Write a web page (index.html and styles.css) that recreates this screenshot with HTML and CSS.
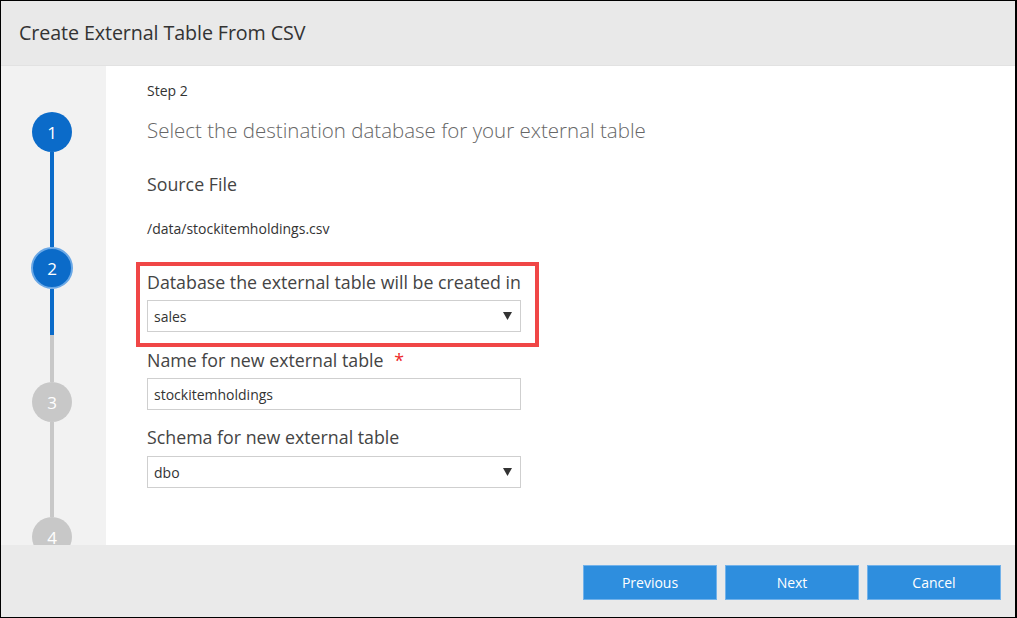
FILE: index.html
```html
<!DOCTYPE html>
<html lang="en">
<head>
<meta charset="utf-8">
<title>Create External Table From CSV</title>
<link rel="stylesheet" href="styles.css">
</head>
<body>
<div class="dialog">
  <header class="header">
    <h1 class="title">Create External Table From CSV</h1>
  </header>
  <div class="body">
    <nav class="steps">
      <div class="circle done">1</div>
      <div class="line blue"></div>
      <div class="circle current">2</div>
      <div class="line split"></div>
      <div class="circle todo">3</div>
      <div class="line gray"></div>
      <div class="circle todo">4</div>
    </nav>
    <main class="content">
      <div class="step-no">Step 2</div>
      <div class="heading">Select the destination database for your external table</div>
      <div class="section-label">Source File</div>
      <div class="path">/data/stockitemholdings.csv</div>

      <div class="highlight">
        <div class="label first">Database the external table will be created in</div>
        <div class="select">
          <span>sales</span>
          <svg class="caret" width="9" height="8" viewBox="0 0 9 8"><path d="M0 0H9L4.5 8Z" fill="#333"/></svg>
        </div>
      </div>

      <div class="label second">Name for new external table <span class="req">*</span></div>
      <div class="input">stockitemholdings</div>

      <div class="label third">Schema for new external table</div>
      <div class="select">
        <span>dbo</span>
        <svg class="caret" width="9" height="8" viewBox="0 0 9 8"><path d="M0 0H9L4.5 8Z" fill="#333"/></svg>
      </div>
    </main>
  </div>
  <footer class="footer">
    <button class="btn">Previous</button>
    <button class="btn">Next</button>
    <button class="btn">Cancel</button>
  </footer>
</div>
</body>
</html>
```
FILE: styles.css
```css
* { box-sizing: border-box; }
html, body { margin: 0; padding: 0; background: #fff; }
body { font-family: "Open Sans", "Noto Sans", sans-serif; color: #333; }

.dialog {
  width: 1017px;
  height: 618px;
  border: 1px solid #000;
  border-right-width: 2px;
  display: flex;
  flex-direction: column;
  overflow: hidden;
}

.header {
  height: 65px;
  flex: none;
  background: #e9e9e9;
  border-bottom: 1px solid #e2e2e2;
  display: flex;
  align-items: center;
  padding-left: 18px;
}
.title {
  margin: 0;
  font-size: 19.7px;
  font-weight: 400;
  color: #333;
  letter-spacing: -0.1px;
  padding-bottom: 2px;
}

.body {
  flex: 1;
  display: flex;
  min-height: 0;
  overflow: hidden;
}

.steps {
  width: 105px;
  flex: none;
  background: #f2f2f2;
  display: flex;
  flex-direction: column;
  align-items: center;
  padding-top: 46px;
  padding-right: 3px;
}
.circle {
  width: 40px;
  height: 40px;
  border-radius: 50%;
  flex: none;
  color: #fff;
  font-size: 17px;
  display: flex;
  align-items: center;
  justify-content: center;
}
.circle.done { background: #0b6bc9; }
.circle.current { width: 42px; height: 42px; background: #0b6bc9; border: 2px solid #6aa8e6; }
.circle.todo { background: #c8c8c8; }
.line { width: 4px; flex: none; }
.line.blue { height: 95px; background: #0b6bc9; }
.line.split { height: 93px; background: linear-gradient(#0b6bc9 0 46px, #c8c8c8 46px); }
.line.gray { height: 95px; background: #c8c8c8; }

.content {
  flex: 1;
  background: #fff;
  padding: 15px 0 0 41px;
}
.step-no { font-size: 14px; line-height: 20px; color: #333; }
.heading {
  margin-top: 15px;
  font-size: 20.5px;
  line-height: 28px;
  font-weight: 300;
  color: #666;
}
.section-label {
  margin-top: 28px;
  font-size: 17.8px;
  line-height: 24px;
  color: #444;
}
.path {
  margin-top: 23px;
  font-size: 14px;
  line-height: 20px;
  color: #333;
}

.highlight {
  margin-top: 23px;
  margin-left: -11px;
  width: fit-content;
  border: 4px solid #f04646;
  padding: 4px 14px 11px 7px;
}

.label {
  font-size: 17.8px;
  line-height: 24px;
  color: #444;
  margin-bottom: 6px;
}
.label.second { margin-top: 1px; }
.label.third { margin-top: 15px; margin-bottom: 7px; }
.req { color: #ee2a2a; margin-left: 6px; }

.select, .input {
  width: 374px;
  height: 32px;
  border: 1px solid #cfcfcf;
  background: #fff;
  font-size: 14px;
  color: #333;
  display: flex;
  align-items: center;
  justify-content: space-between;
  padding: 0 8px 0 6px;
}

.footer {
  height: 72px;
  flex: none;
  background: #eaeaea;
  display: flex;
  justify-content: flex-end;
  align-items: flex-start;
  gap: 8px;
  padding: 20px 14px 0 0;
}
.btn {
  width: 134px;
  height: 35px;
  background: #2e8ede;
  border: 1px solid #72b2ea;
  color: #fff;
  font-family: "Open Sans", "Noto Sans", sans-serif;
  font-size: 14px;
  padding: 0;
}
```
